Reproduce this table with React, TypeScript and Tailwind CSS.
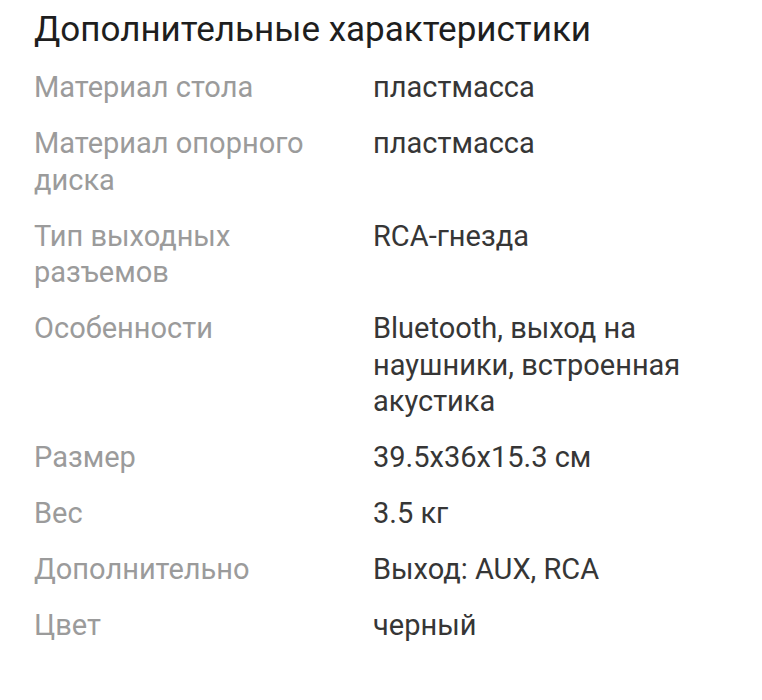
export default function App() {
  const rows: [string, string][] = [
    ["Материал стола", "пластмасса"],
    ["Материал опорного диска", "пластмасса"],
    ["Тип выходных разъемов", "RCA-гнезда"],
    ["Особенности", "Bluetooth, выход на наушники, встроенная акустика"],
    ["Размер", "39.5x36x15.3 см"],
    ["Вес", "3.5 кг"],
    ["Дополнительно", "Выход: AUX, RCA"],
    ["Цвет", "черный"],
  ];
  return (
    <div className="w-[762px] h-[700px] bg-white pl-[34px] pr-[34px] pt-[10px]" style={{ fontFamily: "Roboto, sans-serif" }}>
      <h1 className="text-[35px] leading-[40px] text-[#1e1e1e] font-normal">Дополнительные характеристики</h1>
      <div className="mt-[19px] grid grid-cols-[315px_1fr] gap-x-[24px] gap-y-[19.5px] text-[29px] leading-[36.5px]">
        {rows.map(([k, v]) => (
          <div key={k} className="contents">
            <div className="text-[#9b9b9b]">{k}</div>
            <div className="text-[#363636]">{v}</div>
          </div>
        ))}
      </div>
    </div>
  );
}
